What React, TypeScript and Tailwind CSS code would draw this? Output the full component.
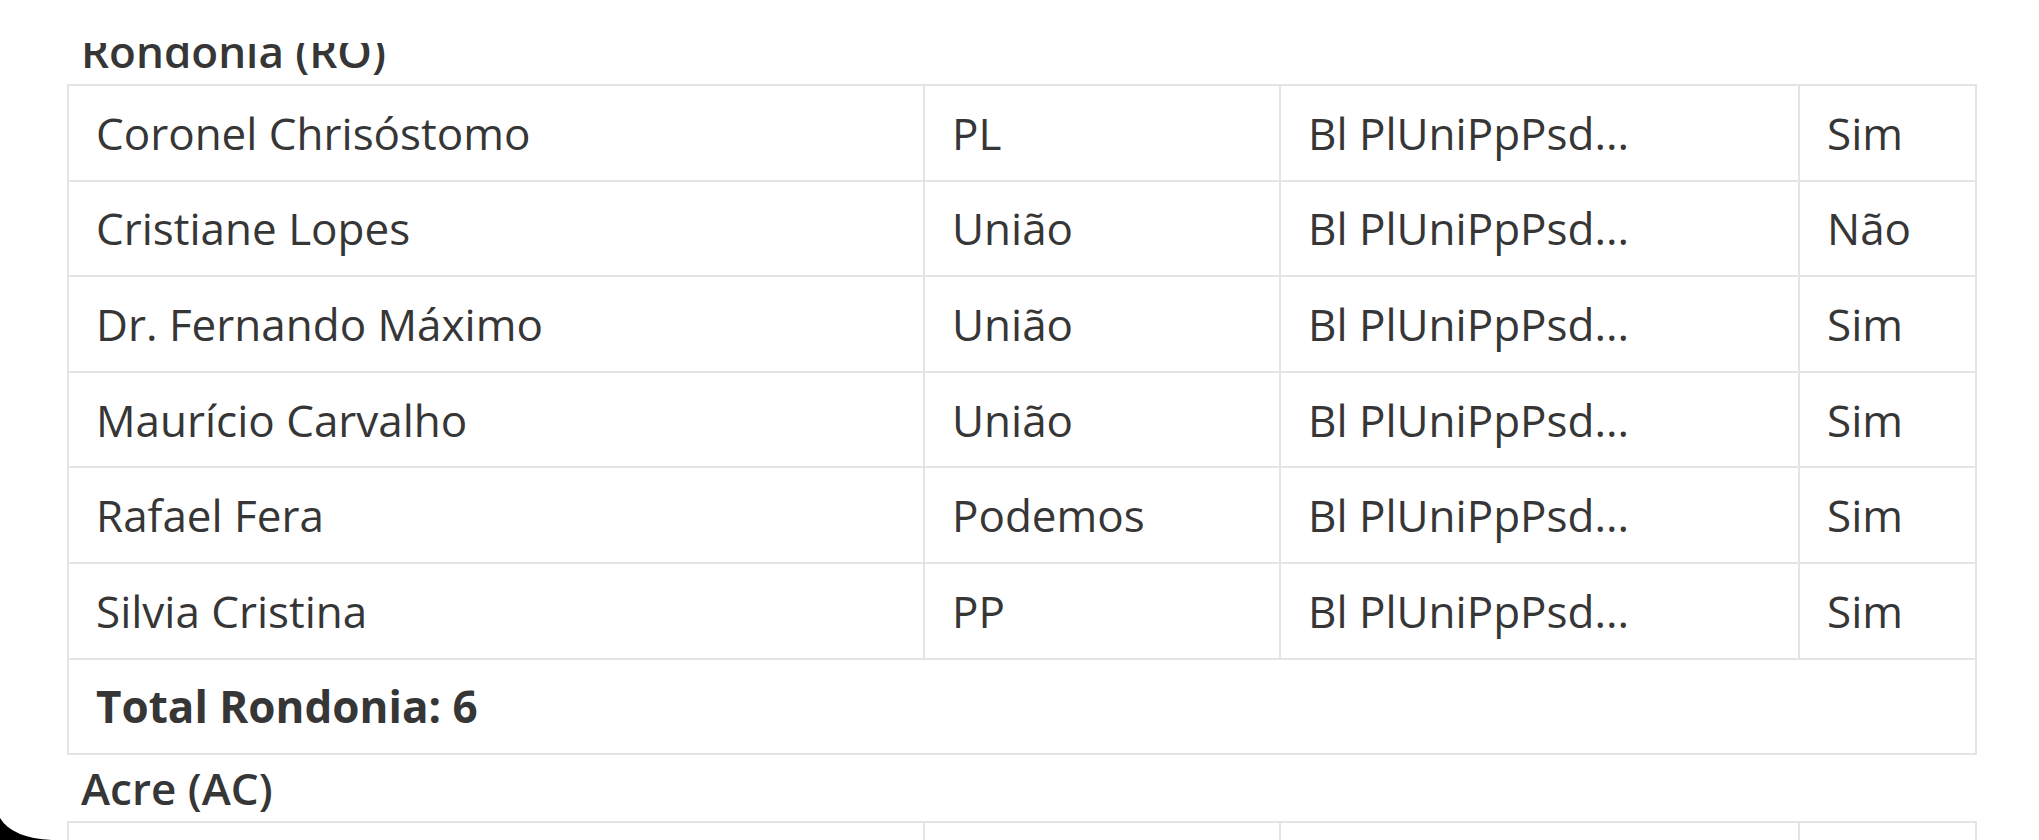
import React from "react";

type Deputado = {
  nome: string;
  partido: string;
  bloco: string;
  presente: string;
};

const estados: { titulo: string; total: string; deputados: Deputado[] }[] = [
  {
    titulo: "Rondonia (RO)",
    total: "Total Rondonia: 6",
    deputados: [
      { nome: "Coronel Chrisóstomo", partido: "PL", bloco: "Bl PlUniPpPsd...", presente: "Sim" },
      { nome: "Cristiane Lopes", partido: "União", bloco: "Bl PlUniPpPsd...", presente: "Não" },
      { nome: "Dr. Fernando Máximo", partido: "União", bloco: "Bl PlUniPpPsd...", presente: "Sim" },
      { nome: "Maurício Carvalho", partido: "União", bloco: "Bl PlUniPpPsd...", presente: "Sim" },
      { nome: "Rafael Fera", partido: "Podemos", bloco: "Bl PlUniPpPsd...", presente: "Sim" },
      { nome: "Silvia Cristina", partido: "PP", bloco: "Bl PlUniPpPsd...", presente: "Sim" },
    ],
  },
  {
    titulo: "Acre (AC)",
    total: "Total Acre: 8",
    deputados: [
      { nome: "Antônia Lúcia", partido: "Republicanos", bloco: "Bl PlUniPpPsd...", presente: "Sim" },
      { nome: "Coronel Ulysses", partido: "União", bloco: "Bl PlUniPpPsd...", presente: "Sim" },
      { nome: "Eduardo Velloso", partido: "União", bloco: "Bl PlUniPpPsd...", presente: "Sim" },
    ],
  },
];

const cell = "border-2 border-[#e4e4e4] px-[27px] py-[13.8px] align-middle";

function TabelaEstado({ titulo, total, deputados }: (typeof estados)[number]) {
  return (
    <div>
      <h2 className="pl-[14px] font-semibold">{titulo}</h2>
      <table className="w-[1910px] table-fixed border-collapse">
        <colgroup>
          <col className="w-[856px]" />
          <col className="w-[356px]" />
          <col className="w-[519px]" />
          <col className="w-[177px]" />
        </colgroup>
        <tbody>
          {deputados.map((d) => (
            <tr key={d.nome}>
              <td className={cell}>{d.nome}</td>
              <td className={cell}>{d.partido}</td>
              <td className={cell}>{d.bloco}</td>
              <td className={cell}>{d.presente}</td>
            </tr>
          ))}
          <tr>
            <td colSpan={4} className={`${cell} font-bold`}>
              {total}
            </td>
          </tr>
        </tbody>
      </table>
    </div>
  );
}

export default function App() {
  return (
    <div
      className="relative h-[840px] w-[2039px] overflow-hidden bg-white text-[44px] leading-[66px] text-[#363636]"
      style={{ fontFamily: '"Open Sans", "Noto Sans", sans-serif' }}
    >
      <div className="pl-[67px] pt-[18px]">
        {estados.map((e) => (
          <TabelaEstado key={e.titulo} {...e} />
        ))}
      </div>

      {/* blank sticky header covering the scrolled heading */}
      <div className="absolute left-0 right-0 top-0 h-[43px] bg-white" />

      {/* device screen corner */}
      <svg
        className="absolute bottom-0 left-0"
        width="60"
        height="24"
        viewBox="0 816 60 24"
      >
        <path d="M0 818 Q 12 838 52 840 L 0 840 Z" fill="#000" />
      </svg>
    </div>
  );
}
